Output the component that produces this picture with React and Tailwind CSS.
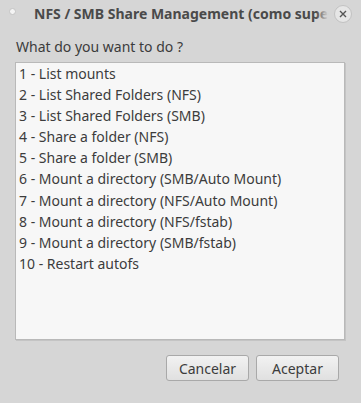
export default function App() {
  const items = [
    "1 - List mounts",
    "2 - List Shared Folders (NFS)",
    "3 - List Shared Folders (SMB)",
    "4 - Share a folder (NFS)",
    "5 - Share a folder (SMB)",
    "6 - Mount a directory (SMB/Auto Mount)",
    "7 - Mount a directory (NFS/Auto Mount)",
    "8 - Mount a directory (NFS/fstab)",
    "9 - Mount a directory (SMB/fstab)",
    "10 - Restart autofs",
  ];

  return (
    <div
      className="w-[361px] h-[403px] bg-[#d6d6d6] flex flex-col text-[#3c3c3c] overflow-hidden"
      style={{ fontFamily: '"Noto Sans", "Open Sans", sans-serif' }}
    >
      {/* title bar */}
      <div className="h-[27px] flex items-center relative">
        <div className="w-[7px] h-[7px] rounded-full bg-[#f4f4f4] border border-[#c4c4c4] ml-[9px] mt-[-4px]" />
        <div className="ml-[18px] whitespace-nowrap text-[14px] font-bold text-[#4a4a4a] mt-[-1px] relative">
          NFS / SMB Share Management (como supe
          <div className="absolute right-0 top-0 h-full w-[12px] bg-gradient-to-r from-transparent to-[#d6d6d6]" />
        </div>
        <div className="absolute left-[334px] top-[5px] w-[18px] h-[18px] rounded-full bg-[#e6e6e6] border border-[#c2c2c2] flex items-center justify-center">
          <svg width="8" height="8" viewBox="0 0 8 8">
            <path d="M1 1L7 7M7 1L1 7" stroke="#555" strokeWidth="1.4" />
          </svg>
        </div>
      </div>

      <div className="px-[15px] pt-[10px] flex flex-col flex-1">
        <div className="text-[14px] leading-[20px] ml-[1px]">What do you want to do ?</div>
        <div className="mt-[5px] w-[330px] h-[278px] bg-[#f7f7f7] border border-[#b9b9b9] shadow-[1px_1px_0_#c4c4c4]">
          {items.map((t) => (
            <div key={t} className="h-[21.1px] leading-[21px] text-[14px] pl-[3px] whitespace-nowrap">
              {t}
            </div>
          ))}
        </div>
        <div className="flex justify-end gap-[7px] mt-[15px] pr-[7px]">
          <button className="w-[83px] h-[26px] rounded-[3px] border border-[#a9a9a9] bg-gradient-to-b from-[#f2f2f2] to-[#e0e0e0] text-[14px] text-[#3c3c3c]">
            Cancelar
          </button>
          <button className="w-[83px] h-[26px] rounded-[3px] border border-[#a9a9a9] bg-gradient-to-b from-[#f2f2f2] to-[#e0e0e0] text-[14px] text-[#3c3c3c]">
            Aceptar
          </button>
        </div>
      </div>
    </div>
  );
}
